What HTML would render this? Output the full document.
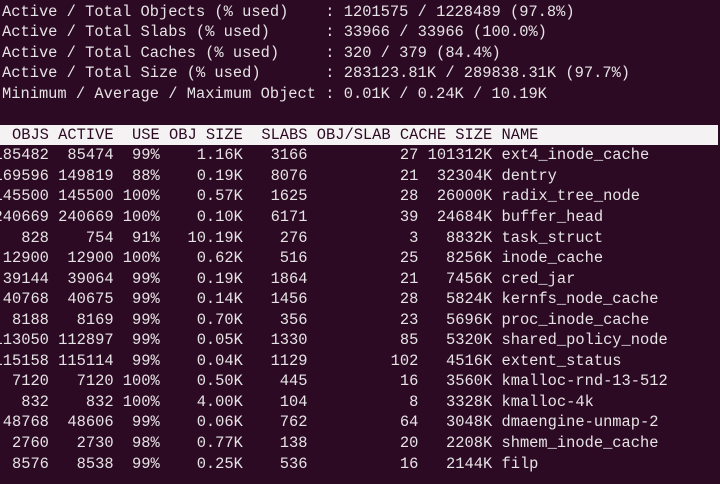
<!DOCTYPE html>
<html><head><meta charset="utf-8"><style>
html,body{margin:0;padding:0;}
body{width:720px;height:484px;background:#2c0a23;overflow:hidden;position:relative;}
pre{position:absolute;margin:0;font-family:"Liberation Mono","DejaVu Sans Mono",monospace;font-size:15.4px;line-height:20.55px;color:#e6e3e5;white-space:pre;}
#top{left:2px;top:1.5px;}
#tbl{left:-6.5px;top:124.8px;}
.hd{display:block;background:#f4f2f3;color:#2c0a23;width:724px;}
</style></head><body>
<pre id="top">Active / Total Objects (% used)    : 1201575 / 1228489 (97.8%)
Active / Total Slabs (% used)      : 33966 / 33966 (100.0%)
Active / Total Caches (% used)     : 320 / 379 (84.4%)
Active / Total Size (% used)       : 283123.81K / 289838.31K (97.7%)
Minimum / Average / Maximum Object : 0.01K / 0.24K / 10.19K</pre>
<pre id="tbl"><span class="hd">  OBJS ACTIVE  USE OBJ SIZE  SLABS OBJ/SLAB CACHE SIZE NAME</span>185482  85474  99%    1.16K   3166          27 101312K ext4_inode_cache
169596 149819  88%    0.19K   8076          21  32304K dentry
145500 145500 100%    0.57K   1625          28  26000K radix_tree_node
240669 240669 100%    0.10K   6171          39  24684K buffer_head
   828    754  91%   10.19K    276           3   8832K task_struct
 12900  12900 100%    0.62K    516          25   8256K inode_cache
 39144  39064  99%    0.19K   1864          21   7456K cred_jar
 40768  40675  99%    0.14K   1456          28   5824K kernfs_node_cache
  8188   8169  99%    0.70K    356          23   5696K proc_inode_cache
113050 112897  99%    0.05K   1330          85   5320K shared_policy_node
115158 115114  99%    0.04K   1129         102   4516K extent_status
  7120   7120 100%    0.50K    445          16   3560K kmalloc-rnd-13-512
   832    832 100%    4.00K    104           8   3328K kmalloc-4k
 48768  48606  99%    0.06K    762          64   3048K dmaengine-unmap-2
  2760   2730  98%    0.77K    138          20   2208K shmem_inode_cache
  8576   8538  99%    0.25K    536          16   2144K filp</pre>
</body></html>
